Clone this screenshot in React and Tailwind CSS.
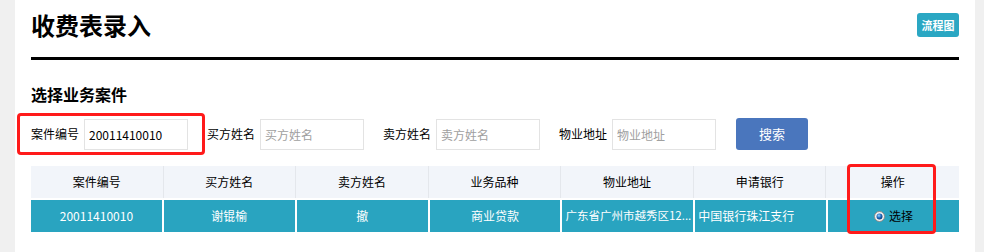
const columns = ["案件编号", "买方姓名", "卖方姓名", "业务品种", "物业地址", "申请银行", "操作"];

const row = {
  caseNo: "20011410010",
  buyer: "谢锟榆",
  seller: "撤",
  product: "商业贷款",
  address: "广东省广州市越秀区12...",
  bank: "中国银行珠江支行",
};

const filters = [
  { label: "案件编号", value: "20011410010", placeholder: "" },
  { label: "买方姓名", value: "", placeholder: "买方姓名" },
  { label: "卖方姓名", value: "", placeholder: "卖方姓名" },
  { label: "物业地址", value: "", placeholder: "物业地址" },
];

function Radio() {
  return (
    <svg width="11" height="11" viewBox="0 0 11 11">
      <defs>
        <radialGradient id="dot" cx="40%" cy="35%" r="65%">
          <stop offset="0%" stopColor="#9fd4ff" />
          <stop offset="55%" stopColor="#1f6fc2" />
          <stop offset="100%" stopColor="#0b3a78" />
        </radialGradient>
      </defs>
      <circle cx="5.5" cy="5.5" r="5" fill="#f4f4f4" stroke="#8a8a8a" strokeWidth="1" />
      <circle cx="5.5" cy="5.5" r="3" fill="url(#dot)" />
    </svg>
  );
}

export default function App() {
  return (
    <div className="flex h-[252px] w-[984px] overflow-hidden bg-[#f0f0f0] font-['Noto_Sans_CJK_SC','Liberation_Sans',sans-serif] text-[12px] text-black">
      <div className="w-[15px] shrink-0" />
      <div className="relative w-[960px] shrink-0 bg-white px-4">
        {/* page header */}
        <div className="flex h-[50px] items-center justify-between">
          <h1 className="text-[24px] font-bold leading-[32px]">收费表录入</h1>
          <button className="flex h-[24px] w-[42px] items-center justify-center rounded-[3px] bg-[#2aa7c3] text-[11px] font-bold text-white">
            流程图
          </button>
        </div>
        <div className="mt-[7px] h-[3px] bg-black" />

        <h2 className="mt-[22px] h-[24px] text-[16px] font-bold leading-[24px]">选择业务案件</h2>

        {/* filters */}
        <div className="relative mt-[12px] flex h-[32px] items-center">
          {filters.map((f, i) => (
            <div key={f.label} className={`flex items-center ${i > 0 ? "ml-[19px]" : ""}`}>
              <span className="w-[48px] leading-[16px]">{f.label}</span>
              <input
                className="ml-[5px] h-[31px] w-[104px] border border-[#e3e3e3] px-[4px] text-[12px] text-black outline-none placeholder:text-[#a0a0a0]"
                defaultValue={f.value}
                placeholder={f.placeholder}
              />
            </div>
          ))}
          <button className="ml-[20px] h-[32px] w-[72px] rounded-[3px] bg-[#4a76bd] text-[13px] text-white">
            搜索
          </button>
          <div className="pointer-events-none absolute left-[-14px] top-[-5px] h-[42px] w-[188px] rounded-[4px] border-[3px] border-[#ff1a1a]" />
        </div>

        {/* results table */}
        <div className="relative mt-[16px] w-[928px]">
          <div className="grid h-[32px] grid-cols-7 bg-[#f2f5fa]">
            {columns.map((c, i) => (
              <div
                key={c}
                className={`flex items-center justify-center ${i < columns.length - 1 ? "border-r border-[#e4e7ec]" : ""}`}
              >
                {c}
              </div>
            ))}
          </div>
          <div className="mt-[2px] grid h-[32px] grid-cols-7 gap-x-[2px] text-white">
            <div className="flex items-center justify-center bg-[#29a4c0]">{row.caseNo}</div>
            <div className="flex items-center justify-center bg-[#29a4c0]">{row.buyer}</div>
            <div className="flex items-center justify-center bg-[#29a4c0]">{row.seller}</div>
            <div className="flex items-center justify-center bg-[#29a4c0]">{row.product}</div>
            <div className="flex items-center overflow-hidden whitespace-nowrap bg-[#29a4c0] pl-[3px] text-[11.5px]">
              {row.address}
            </div>
            <div className="flex items-center overflow-hidden whitespace-nowrap bg-[#29a4c0] px-[3px]">
              {row.bank}
            </div>
            <div className="flex items-center justify-center gap-[4px] bg-[#29a4c0] text-black">
              <Radio />
              <span>选择</span>
            </div>
          </div>
          <div className="pointer-events-none absolute left-[816px] top-[-2px] h-[70px] w-[89px] rounded-[4px] border-[3px] border-[#ff1a1a]" />
        </div>
      </div>
      <div className="flex-1" />
    </div>
  );
}
